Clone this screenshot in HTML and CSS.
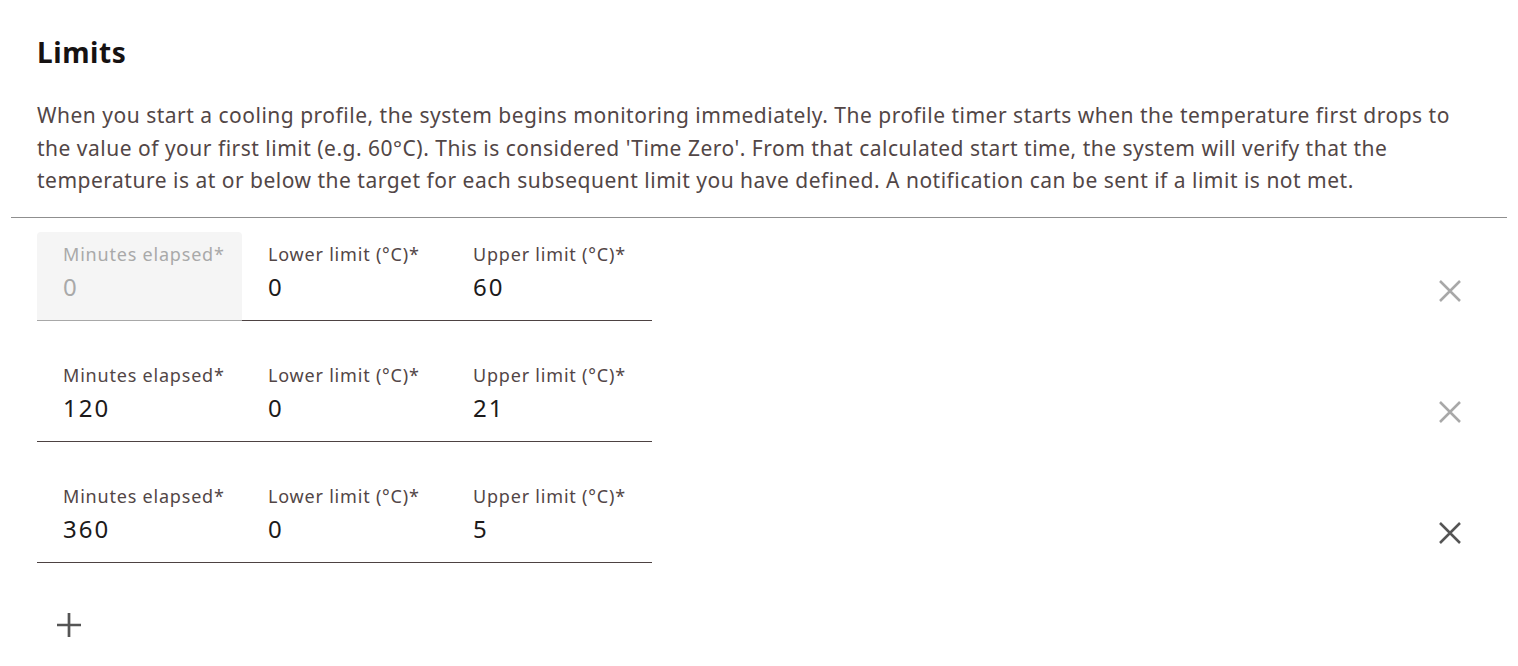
FILE: index.html
```html
<!DOCTYPE html>
<html lang="en">
<head>
<meta charset="utf-8">
<title>Limits</title>
<link rel="stylesheet" href="styles.css">
</head>
<body>
<div class="page">
  <section class="intro">
    <h2 class="title">Limits</h2>
    <p class="desc">When you start a cooling profile, the system begins monitoring immediately. The profile timer starts when the temperature first drops to the value of your first limit (e.g. 60°C). This is considered 'Time Zero'. From that calculated start time, the system will verify that the temperature is at or below the target for each subsequent limit you have defined. A notification can be sent if a limit is not met.</p>
  </section>
  <hr class="divider">
  <div class="rows">
    <div class="row">
      <div class="fields">
        <div class="field disabled"><span class="label">Minutes elapsed*</span><span class="value">0</span></div>
        <div class="field"><span class="label">Lower limit (°C)*</span><span class="value">0</span></div>
        <div class="field"><span class="label">Upper limit (°C)*</span><span class="value">60</span></div>
      </div>
      <button class="remove muted" aria-label="Remove"><svg viewBox="0 0 24 24" width="24" height="24"><path d="M2 2L22 22M22 2L2 22"/></svg></button>
    </div>
    <div class="row">
      <div class="fields">
        <div class="field"><span class="label">Minutes elapsed*</span><span class="value">120</span></div>
        <div class="field"><span class="label">Lower limit (°C)*</span><span class="value">0</span></div>
        <div class="field"><span class="label">Upper limit (°C)*</span><span class="value">21</span></div>
      </div>
      <button class="remove muted" aria-label="Remove"><svg viewBox="0 0 24 24" width="24" height="24"><path d="M2 2L22 22M22 2L2 22"/></svg></button>
    </div>
    <div class="row">
      <div class="fields">
        <div class="field"><span class="label">Minutes elapsed*</span><span class="value">360</span></div>
        <div class="field"><span class="label">Lower limit (°C)*</span><span class="value">0</span></div>
        <div class="field"><span class="label">Upper limit (°C)*</span><span class="value">5</span></div>
      </div>
      <button class="remove" aria-label="Remove"><svg viewBox="0 0 24 24" width="24" height="24"><path d="M2 2L22 22M22 2L2 22"/></svg></button>
    </div>
  </div>
  <button class="add" aria-label="Add limit"><svg viewBox="0 0 24 24" width="24" height="24"><path d="M12 0V24M0 12H24"/></svg></button>
</div>
</body>
</html>
```
FILE: styles.css
```css
* { box-sizing: border-box; }
html, body { margin: 0; padding: 0; background: #fff; }
body {
  font-family: "Noto Sans", "Open Sans", sans-serif;
  color: #524646;
}
.page { padding: 0 11px; }
.intro { padding: 30px 26px 0; }
.title {
  margin: 0;
  font-size: 28px;
  line-height: 44px;
  font-weight: 700;
  color: #161212;
  letter-spacing: 0.6px;
}
.desc {
  margin: 25px 0 0;
  max-width: 1430px;
  font-size: 21px;
  line-height: 32.5px;
  letter-spacing: 0.5px;
  color: #524646;
}
.divider {
  margin: 20px 0 14px;
  border: 0;
  border-top: 1px solid #8f8f8f;
  height: 0;
}
.rows {
  display: flex;
  flex-direction: column;
  gap: 32px;
  padding: 0 26px;
}
.row {
  display: flex;
  align-items: flex-start;
  justify-content: space-between;
}
.fields {
  display: flex;
}
.field {
  width: 205px;
  height: 89px;
  padding: 10px 0 0 26px;
  display: flex;
  flex-direction: column;
  border-bottom: 1px solid #4d4242;
}
.field.disabled {
  background: #f5f5f5;
  border-radius: 4px 4px 0 0;
  border-bottom-color: #a8a8a8;
}
.label {
  font-size: 18px;
  line-height: 24px;
  color: #524646;
  letter-spacing: 0.8px;
}
.value {
  margin-top: 7px;
  font-size: 24px;
  line-height: 28px;
  color: #1c1a1a;
  letter-spacing: 2px;
}
.field.disabled .label,
.field.disabled .value { color: #a9a9a9; }
.remove, .add {
  background: none;
  border: 0;
  padding: 0;
  cursor: pointer;
  display: flex;
}
.remove { margin: 47px 19px 0 0; }
.remove svg path, .add svg path {
  fill: none;
  stroke: #555;
  stroke-width: 2.5;
  stroke-linecap: butt;
}
.remove.muted svg path { stroke: #a8a8a8; }
.add { margin: 50px 0 0 46px; }
.add svg path { stroke: #555; stroke-width: 2.7; }
```
